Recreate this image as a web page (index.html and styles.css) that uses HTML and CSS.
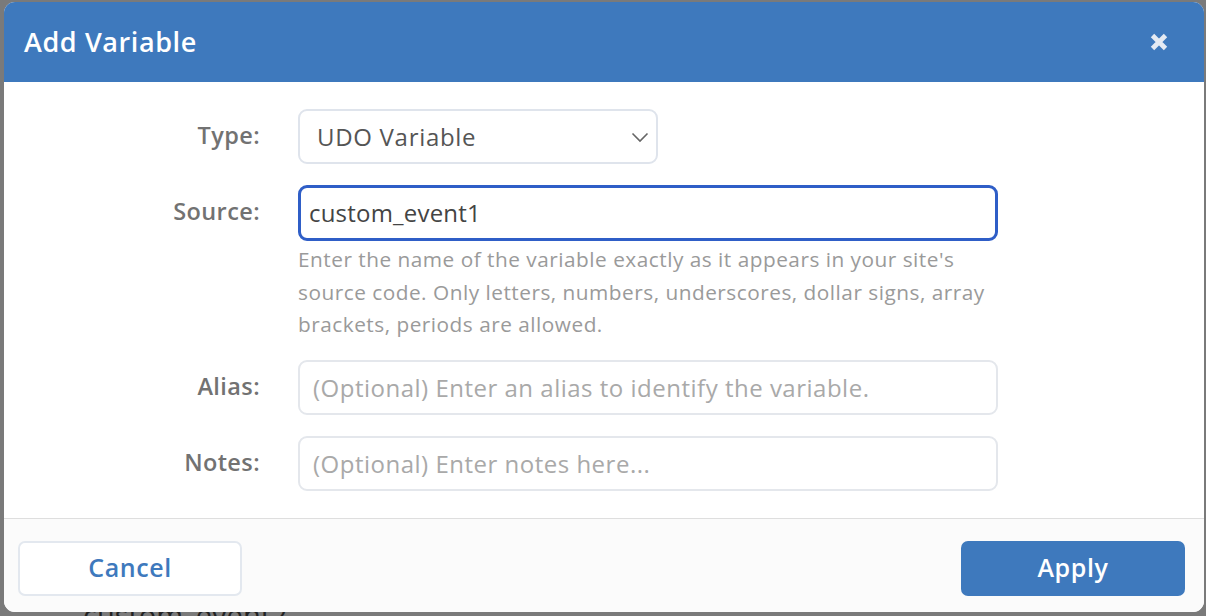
FILE: index.html
```html
<!DOCTYPE html>
<html lang="en">
<head>
<meta charset="utf-8">
<title>Add Variable</title>
<link rel="stylesheet" href="styles.css">
</head>
<body>
<div class="backdrop-text">custom_event2</div>
<div class="modal">
  <header class="modal-header">
    <h1 class="modal-title">Add Variable</h1>
    <button class="close" aria-label="Close">
      <svg width="20" height="20" viewBox="0 0 20 20"><path d="M3.5 3.5 L16.5 16.5 M16.5 3.5 L3.5 16.5" stroke="#e4eaf3" stroke-width="4.8" stroke-linecap="butt" fill="none"/></svg>
    </button>
  </header>
  <main class="modal-body">
    <form class="form">
      <label class="label">Type:</label>
      <div class="select">
        <span>UDO Variable</span>
        <svg class="chev" width="18" height="11" viewBox="0 0 18 11"><path d="M1.5 1.5 L9 9 L16.5 1.5" stroke="#666" stroke-width="1.6" fill="none"/></svg>
      </div>

      <label class="label">Source:</label>
      <div class="field">
        <div class="input focus">custom_event1</div>
        <p class="help">Enter the name of the variable exactly as it appears in your site's source code. Only letters, numbers, underscores, dollar signs, array brackets, periods are allowed.</p>
      </div>

      <label class="label">Alias:</label>
      <div class="input placeholder">(Optional) Enter an alias to identify the variable.</div>

      <label class="label">Notes:</label>
      <div class="input placeholder">(Optional) Enter notes here...</div>
    </form>
  </main>
  <footer class="modal-footer">
    <button class="btn btn-cancel">Cancel</button>
    <button class="btn btn-apply">Apply</button>
  </footer>
</div>
</body>
</html>
```
FILE: styles.css
```css
* { box-sizing: border-box; }
html, body { margin: 0; padding: 0; }
body {
  width: 1206px;
  height: 616px;
  background: #7a7a7a;
  font-family: "Open Sans", "Noto Sans", sans-serif;
  overflow: hidden;
  position: relative;
  padding: 2px 2px 4px 4px;
}
.backdrop-text {
  position: absolute;
  left: 83px;
  top: 598px;
  font-size: 29px;
  line-height: 34px;
  color: #222;
}
.modal {
  position: relative;
  width: 1200px;
  height: 610px;
  background: #fff;
  border-radius: 11px;
  overflow: hidden;
  display: flex;
  flex-direction: column;
}
.modal-header {
  height: 80px;
  background: #3e79bd;
  display: flex;
  align-items: center;
  justify-content: space-between;
  padding: 0 35px 0 20px;
}
.modal-title {
  margin: 0;
  color: #fff;
  font-size: 27px;
  font-weight: 600;
  letter-spacing: 0.6px;
  padding-bottom: 2px;
}
.close {
  border: 0;
  background: none;
  padding: 0;
  width: 20px;
  height: 20px;
  display: flex;
}
.modal-body {
  flex: 1;
  padding: 27px 0 0 0;
  border-bottom: 1px solid #dedede;
}
.form {
  display: grid;
  grid-template-columns: 256px 700px;
  column-gap: 38px;
  row-gap: 21px;
  align-items: start;
}
.label {
  text-align: right;
  font-size: 23.5px;
  font-weight: 600;
  letter-spacing: 0.4px;
  color: #727272;
  height: 55px;
  line-height: 53px;
}
.select {
  width: 360px;
  height: 55px;
  border: 2px solid #dfe4ec;
  border-radius: 9px;
  display: flex;
  align-items: center;
  justify-content: space-between;
  padding: 0 7px 0 17px;
  font-size: 24px;
  letter-spacing: 0.7px;
  color: #555;
}
.chev { margin-top: 1px; }
.input {
  height: 55px;
  border: 2px solid #e4e7ec;
  border-radius: 9px;
  display: flex;
  align-items: center;
  padding: 0 13px;
  font-size: 24px;
  letter-spacing: 0.5px;
  color: #444;
}
.input.focus {
  height: 56px;
  border: 3px solid #2f5ec7;
  padding: 0 8px 1px;
  letter-spacing: 0.2px;
}
.input.placeholder { color: #a9a9a9; }
.field { display: flex; flex-direction: column; }
.help {
  margin: 2px 0 -2px 0;
  font-size: 20.8px;
  letter-spacing: 0.5px;
  line-height: 32.5px;
  color: #9a9a9a;
  width: 700px;
}
.modal-footer {
  height: 93px;
  background: #fbfbfb;
  display: flex;
  align-items: flex-start;
  justify-content: space-between;
  padding: 22px 19px 0 14px;
}
.btn {
  width: 224px;
  height: 55px;
  border-radius: 7px;
  font-family: inherit;
  font-size: 25px;
  font-weight: 600;
  letter-spacing: 0.6px;
  padding: 0 0 4px;
  cursor: pointer;
}
.btn-cancel {
  background: #fff;
  border: 2px solid #e3e8ef;
  color: #3e79bd;
}
.btn-apply {
  background: #3e79bd;
  border: 0;
  color: #fff;
}
```
